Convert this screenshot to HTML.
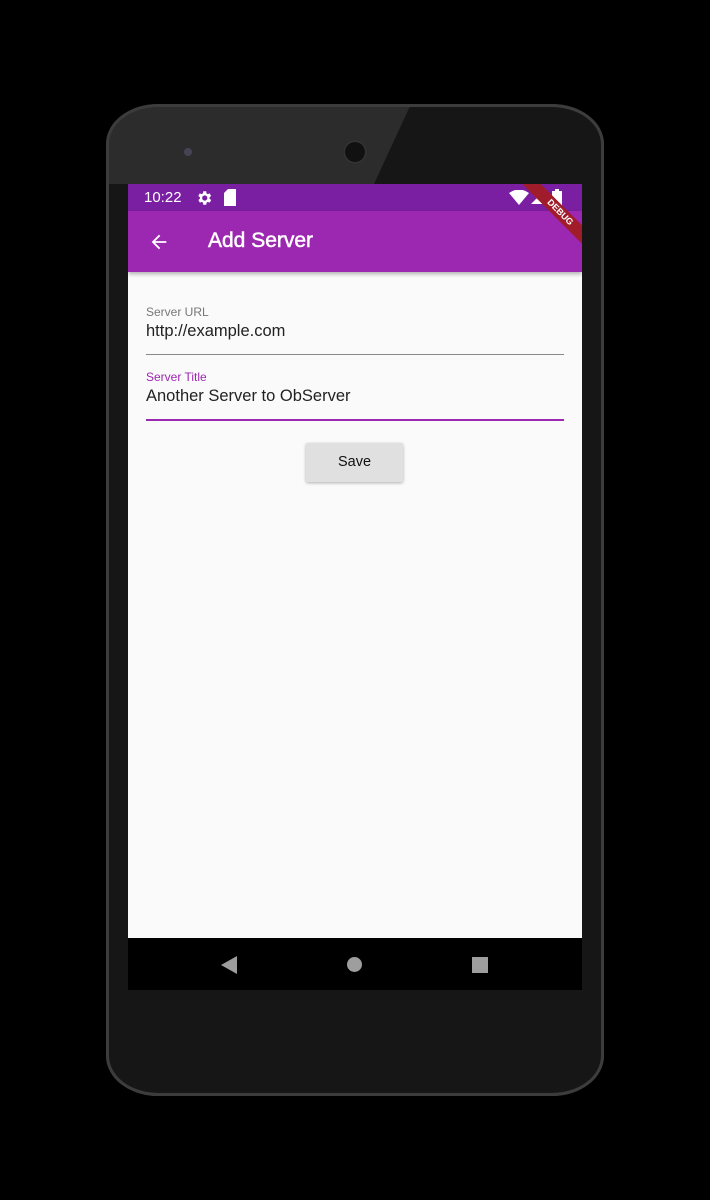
<!DOCTYPE html>
<html><head><style>
html,body{margin:0;padding:0;background:#000;width:710px;height:1200px;overflow:hidden;font-family:"Liberation Sans",Roboto,sans-serif}
.phone{position:absolute;left:106px;top:104px;width:498px;height:992px;border-radius:52px/40px;background:#161616;box-shadow:inset 0 0 0 3px #3c3c3c;overflow:hidden}
.screen{position:absolute;left:128px;top:184px;width:454px;height:806px;background:#fafafa;overflow:hidden}
.sb{position:absolute;left:0;top:0;width:454px;height:27px;background:#7b1fa2;color:#fff;font-size:15px}
.ab{position:absolute;left:0;top:27px;width:454px;height:61px;background:#9c27b0;box-shadow:0 2px 4px rgba(0,0,0,.3);color:#fff}
.nav{position:absolute;left:0;top:754px;width:454px;height:52px;background:#000}
.lbl{position:absolute;left:18px;font-size:12px}
.val{position:absolute;left:18px;font-size:16.5px;color:#222}
</style></head><body>
<div class="phone">
 <svg style="position:absolute;left:0;top:0" width="498" height="80"><polygon points="0,0 305,0 268,80 0,80" fill="#2c2c2c"/></svg>
 <div style="position:absolute;inset:0;border-radius:52px/40px;box-shadow:inset 0 0 0 3px #3c3c3c"></div>
</div>
<div style="position:absolute;left:184px;top:148px;width:8px;height:8px;border-radius:50%;background:#445"></div>
<div style="position:absolute;left:343px;top:140px;width:24px;height:24px;border-radius:50%;background:#111;box-shadow:inset 0 0 0 2px #333"></div>
<div class="screen">
 <div class="sb">
  <span style="position:absolute;left:16px;top:5px">10:22</span>
  <svg style="position:absolute;left:67px;top:5px" width="18" height="18" viewBox="0 0 24 24"><path fill="#fff" d="M19.4 13a7.5 7.5 0 000-2l2.1-1.6-2-3.5-2.5 1a7 7 0 00-1.7-1L15 3h-4l-.4 2.9a7 7 0 00-1.7 1l-2.5-1-2 3.5L6.6 11a7.5 7.5 0 000 2l-2.1 1.6 2 3.5 2.5-1a7 7 0 001.7 1L11 21h4l.4-2.9a7 7 0 001.7-1l2.5 1 2-3.5zM13 15.5a3.5 3.5 0 110-7 3.5 3.5 0 010 7z"/></svg>
  <svg style="position:absolute;left:95px;top:5px" width="14" height="17" viewBox="0 0 14 17"><path fill="#fff" d="M5 0h8v17H1V4z"/></svg>
  <svg style="position:absolute;left:381px;top:6px" width="20" height="15" viewBox="0 0 20 15"><path fill="#fff" d="M0 3Q10-4 20 3L10 15z"/></svg>
  <svg style="position:absolute;left:403px;top:8px" width="12" height="12"><path fill="#fff" d="M12 0v12H0z"/></svg>
  <svg style="position:absolute;left:424px;top:5px" width="10" height="17"><rect x="0" y="2" width="10" height="15" fill="#fff"/><rect x="3" y="0" width="4" height="3" fill="#fff"/></svg>
 </div>
 <div class="ab">
  <svg style="position:absolute;left:20px;top:20px" width="22" height="22" viewBox="0 0 24 24"><path fill="#fff" d="M20 11H7.8l5.6-5.6L12 4l-8 8 8 8 1.4-1.4L7.8 13H20z"/></svg>
  <span style="position:absolute;left:80px;top:18px;font-size:21px;-webkit-text-stroke:0.5px #fff">Add Server</span>
 </div>
 <div style="position:absolute;left:382px;top:22px;width:100px;height:13px;background:#a01c2a;transform:rotate(45deg);color:#fff;font-size:9px;font-weight:bold;text-align:center;line-height:13px">DEBUG</div>
 <div class="lbl" style="top:121px;color:#777">Server URL</div>
 <div class="val" style="top:138px">http://example.com</div>
 <div style="position:absolute;left:18px;top:170px;width:418px;height:1px;background:#888"></div>
 <div class="lbl" style="top:186px;color:#9c27b0">Server Title</div>
 <div class="val" style="top:203px">Another Server to ObServer</div>
 <div style="position:absolute;left:18px;top:235px;width:418px;height:2px;background:#9c27b0"></div>
 <div style="position:absolute;left:178px;top:259px;width:97px;height:39px;background:#e0e0e0;box-shadow:0 1px 3px rgba(0,0,0,.3);border-radius:2px;font-size:14.5px;text-align:center;line-height:39px;color:#111">Save</div>
 <div class="nav">
  <svg style="position:absolute;left:93px;top:18px" width="16" height="18"><path fill="#9e9e9e" d="M16 0v18L0 9z"/></svg>
  <div style="position:absolute;left:219px;top:19px;width:15px;height:15px;border-radius:50%;background:#9e9e9e"></div>
  <div style="position:absolute;left:344px;top:19px;width:16px;height:16px;background:#9e9e9e"></div>
 </div>
</div>
</body></html>
